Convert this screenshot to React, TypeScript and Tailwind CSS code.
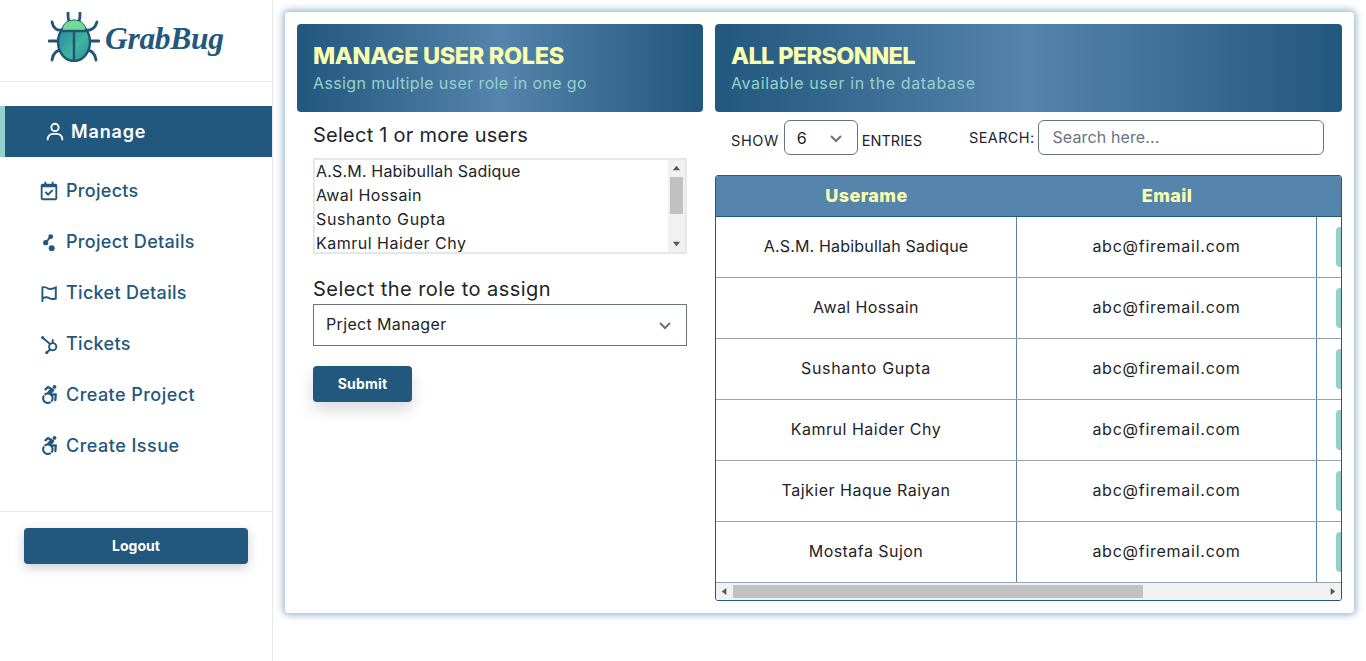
import React from "react";
import { BiUser, BiCalendarCheck, BiChevronDown } from "react-icons/bi";
import { FaAccessibleIcon } from "react-icons/fa";

const Dots = () => (
  <svg viewBox="0 0 18 18" className="w-[18px] h-[18px]" fill="currentColor">
    <circle cx="10.7" cy="3.7" r="2.4" />
    <circle cx="5.7" cy="9.7" r="2.6" />
    <circle cx="11.7" cy="15.3" r="3" />
    <path d="M10 3l1.4 1.2-5 6L5 9z" />
  </svg>
);

const Flag = () => (
  <svg viewBox="0 0 18 18" className="w-[18px] h-[18px]" fill="none" stroke="currentColor" strokeWidth="1.9">
    <path d="M2.4 18V3.5C5 2.5 6 3 8 4.5S12 5 15.8 3.5V14.5C12.5 15.5 11 15.5 9 14S5 13 2.4 14.5" />
  </svg>
);

const Hub = () => (
  <svg viewBox="0 0 20 20" className="w-[20px] h-[20px]" fill="none" stroke="currentColor" strokeWidth="1.9" strokeLinecap="round">
    <circle cx="12.7" cy="12.7" r="3.6" />
    <path d="M12.7 9V6M10 10L3 4M10 15.5L7 18.5" />
    <circle cx="2.7" cy="3.7" r="1.6" fill="currentColor" stroke="none" />
    <circle cx="6.7" cy="18.6" r="1.5" fill="currentColor" stroke="none" />
  </svg>
);

const nav = [
  { label: "Projects", cls: "tracking-[0.3px]", icon: <BiCalendarCheck size={22} className="-ml-[2px]" /> },
  { label: "Project Details", cls: "tracking-[0.3px]", icon: <Dots /> },
  { label: "Ticket Details", cls: "tracking-[0.3px]", icon: <Flag /> },
  { label: "Tickets", cls: "tracking-[0.3px]", icon: <Hub /> },
  { label: "Create Project", cls: "tracking-[0.45px]", icon: <FaAccessibleIcon size={19} /> },
  { label: "Create Issue", cls: "tracking-[0.48px]", icon: <FaAccessibleIcon size={19} /> },
];

const people = [
  { name: "A.S.M. Habibullah Sadique", cls: "tracking-[0.18px]" },
  { name: "Awal Hossain", cls: "tracking-[0.4px]" },
  { name: "Sushanto Gupta", cls: "tracking-[0.65px]" },
  { name: "Kamrul Haider Chy", cls: "tracking-[0.5px]" },
  { name: "Tajkier Haque Raiyan", cls: "tracking-[0.5px]" },
  { name: "Mostafa Sujon", cls: "tracking-[0.45px]" },
];

const Bug = () => (
  <svg viewBox="0 0 52 50" className="w-[52px] h-[50px] shrink-0">
    <defs>
      <linearGradient id="bugBody" x1="0" y1="0" x2="1" y2="1">
        <stop offset="0" stopColor="#2a7f9a" />
        <stop offset="0.6" stopColor="#3fb5a0" />
        <stop offset="1" stopColor="#2a8a96" />
      </linearGradient>
    </defs>
    <g fill="none" stroke="#1f5579" strokeWidth="2.8" strokeLinecap="round">
      <path d="M21 9C20 7 20 4 20 1M31 9C32 7 32 4 32 1" />
      <path d="M14 18C9 19 5 16 4 10M38 18C43 19 47 16 49 10" />
      <path d="M1 29H12M40 29H51" />
      <path d="M14 38C8 38 5 41 4 48M38 38C44 38 47 41 48 48" />
    </g>
    <ellipse cx="26" cy="30" rx="16" ry="19" fill="url(#bugBody)" stroke="#1f5579" strokeWidth="2.4" />
    <path d="M14 18C15 11 20 8 26 8S37 11 38 18C33 20 19 20 14 18Z" fill="#70dc92" stroke="#1f5579" strokeWidth="1" />
    <path d="M14 19H38M26 19V48" stroke="#1f5579" strokeWidth="2.4" fill="none" />
  </svg>
);

const Banner = ({ title, sub, titleCls, subCls }: { title: string; sub: string; titleCls: string; subCls: string }) => (
  <div className="h-[88px] shrink-0 rounded-[4px] bg-[linear-gradient(90deg,#22577e_0%,#5584ac_50%,#22577e_100%)] pl-4 pt-[16px]">
    <div className={"text-[23.5px] leading-[32px] font-extrabold text-[#faffaf] " + titleCls}>{title}</div>
    <div className={"text-[16px] leading-[22px] text-[#95d1cc] " + subCls}>{sub}</div>
  </div>
);

const Triangle = ({ d }: { d: string }) => (
  <svg viewBox="0 0 10 10" className="w-[9px] h-[9px]" fill="#555">
    <path d={d} />
  </svg>
);

export default function App() {
  return (
    <div className="flex h-[661px] w-[1366px] overflow-hidden bg-white text-[#212529] font-['Inter','Noto_Sans',sans-serif]">
      <aside className="w-[273px] shrink-0 border-r border-[#e5e7eb] flex flex-col">
        <div className="h-[82px] shrink-0 border-b border-[#e5e7eb] flex items-start pt-[12px] pl-[48px] gap-[5px]">
          <Bug />
          <span className="mt-[6px] text-[31.5px] leading-[42px] font-bold italic text-[#22577e] font-['Liberation_Serif',serif] tracking-[-0.3px]">GrabBug</span>
        </div>
        <nav className="mt-[24px] h-[405px] shrink-0 flex flex-col">
          <div className="h-[51px] shrink-0 mb-[8px] bg-[#22577e] border-l-[5px] border-[#95d1cc] flex items-center pl-[39px] gap-[5px] text-white text-[18px] font-semibold">
            <BiUser size={22} />
            <span className="tracking-[0.85px] pb-[1px]">Manage</span>
          </div>
          {nav.map((n) => (
            <div key={n.label} className="h-[51px] shrink-0 flex items-center pl-[40px] text-[#22577e] text-[18px] font-medium">
              <span className="w-[26px] flex items-center justify-start">{n.icon}</span>
              <span className={n.cls}>{n.label}</span>
            </div>
          ))}
        </nav>
        <div className="border-t border-[#e5e7eb] pt-[16px] px-[24px]">
          <button className="w-[224px] h-[36px] pb-[2px] rounded-[4px] bg-[#22577e] text-white text-[14px] font-bold shadow-[0_4px_12px_rgba(0,0,0,0.2)]">Logout</button>
        </div>
      </aside>

      <main className="flex-1 pt-[12px] pl-[12px]">
        <div className="w-[1069px] h-[601px] rounded-[4px] bg-white p-[12px] flex gap-[12px] shadow-[0_0_7px_2px_rgba(85,132,172,0.6)]">
          <section className="w-[406px] shrink-0 flex flex-col">
            <Banner title="MANAGE USER ROLES" sub="Assign multiple user role in one go" titleCls="tracking-[-0.35px]" subCls="tracking-[0.38px]" />
            <div className="px-4">
              <div className="mt-[8px] text-[20px] leading-[30px] tracking-[0.25px]">Select 1 or more users</div>
              <div className="mt-[8px] h-[96px] w-[374px] border-2 border-[#e5e7eb] flex overflow-hidden">
                <div className="flex-1 pl-[1px] -mt-[1px] text-[16px] leading-[24px]">
                  {people.slice(0, 4).map((p) => (
                    <div key={p.name} className={"whitespace-nowrap " + p.cls}>{p.name}</div>
                  ))}
                </div>
                <div className="w-[17px] bg-[#f1f1f1] flex flex-col items-center">
                  <div className="h-[17px] flex items-center justify-center"><Triangle d="M5 2l4 5H1z" /></div>
                  <div className="w-[13px] h-[37px] bg-[#c1c1c1]" />
                  <div className="flex-1" />
                  <div className="h-[17px] flex items-center justify-center"><Triangle d="M5 8L1 3h8z" /></div>
                </div>
              </div>
              <div className="mt-[20px] text-[20px] leading-[30px] tracking-[0.45px]">Select the role to assign</div>
              <div className="h-[42px] w-[374px] border border-[#6b7280] flex items-center justify-between pl-[12px] pr-[9px] text-[16px] tracking-[0.35px]">
                <span className="pb-[2px]">Prject Manager</span>
                <BiChevronDown size={24} className="text-[#6b7280]" />
              </div>
              <button className="mt-[20px] w-[99px] h-[36px] pb-[2px] rounded-[4px] bg-[#22577e] text-white text-[14px] font-bold tracking-[0.2px] shadow-[0_8px_16px_rgba(0,0,0,0.15)]">Submit</button>
            </div>
          </section>

          <section className="w-[627px] shrink-0 flex flex-col">
            <Banner title="ALL PERSONNEL" sub="Available user in the database" titleCls="tracking-[-0.65px]" subCls="tracking-[0.62px]" />
            <div className="mt-[8px] h-[35px] flex items-start pl-[16px] text-[14.5px]">
              <span className="mt-[11px] leading-[20px] tracking-[0.6px]">SHOW</span>
              <div className="ml-[5px] w-[74px] h-[35px] rounded-[6px] border border-[#6b7280] flex items-center justify-between pl-[12px] pr-[9px] text-[16px]">
                <span>6</span>
                <BiChevronDown size={24} className="text-[#6b7280]" />
              </div>
              <span className="ml-[4px] mt-[11px] leading-[20px]">ENTRIES</span>
              <span className="ml-[47px] mt-[8px] leading-[20px] tracking-[0.35px]">SEARCH:</span>
              <input
                placeholder="Search here..."
                className="ml-[4px] w-[286px] h-[35px] rounded-[6px] border border-[#6b7280] pl-[13px] pr-[12px] pb-[2px] text-[16px] tracking-[0.12px] placeholder:text-[#6b7280] outline-none"
              />
            </div>
            <div className="mt-[20px] w-[627px] h-[426px] rounded-[3px] border border-[#22577e] flex flex-col overflow-hidden">
              <div className="h-[41px] shrink-0 pb-[2px] bg-[#5584ac] border-b border-[#22577e] flex items-center text-[#faffaf] text-[18px] font-extrabold tracking-[0.4px] text-center">
                <div className="w-[301px]">Userame</div>
                <div className="w-[300px]">Email</div>
              </div>
              {people.map((p) => (
                <div key={p.name} className="h-[61px] shrink-0 border-b border-[#94a3b8] flex items-stretch text-[16px] text-center">
                  <div className={"w-[301px] shrink-0 pb-[2px] border-r border-[#5584ac] flex items-center justify-center " + p.cls}>{p.name}</div>
                  <div className="w-[300px] shrink-0 pb-[2px] border-r border-[#5584ac] flex items-center justify-center tracking-[0.74px]">abc@firemail.com</div>
                  <div className="flex-1 pl-[19px] flex items-center">
                    <div className="w-[40px] h-[40px] shrink-0 rounded-[4px] bg-[#95d1cc]" />
                  </div>
                </div>
              ))}
              <div className="flex-1 bg-[#f1f1f1] flex items-center">
                <div className="w-[17px] flex justify-center"><Triangle d="M2 5l5-4v8z" /></div>
                <div className="w-[410px] h-[13px] bg-[#c1c1c1]" />
                <div className="flex-1" />
                <div className="w-[17px] flex justify-center"><Triangle d="M8 5L3 1v8z" /></div>
              </div>
            </div>
          </section>
        </div>
      </main>
    </div>
  );
}
